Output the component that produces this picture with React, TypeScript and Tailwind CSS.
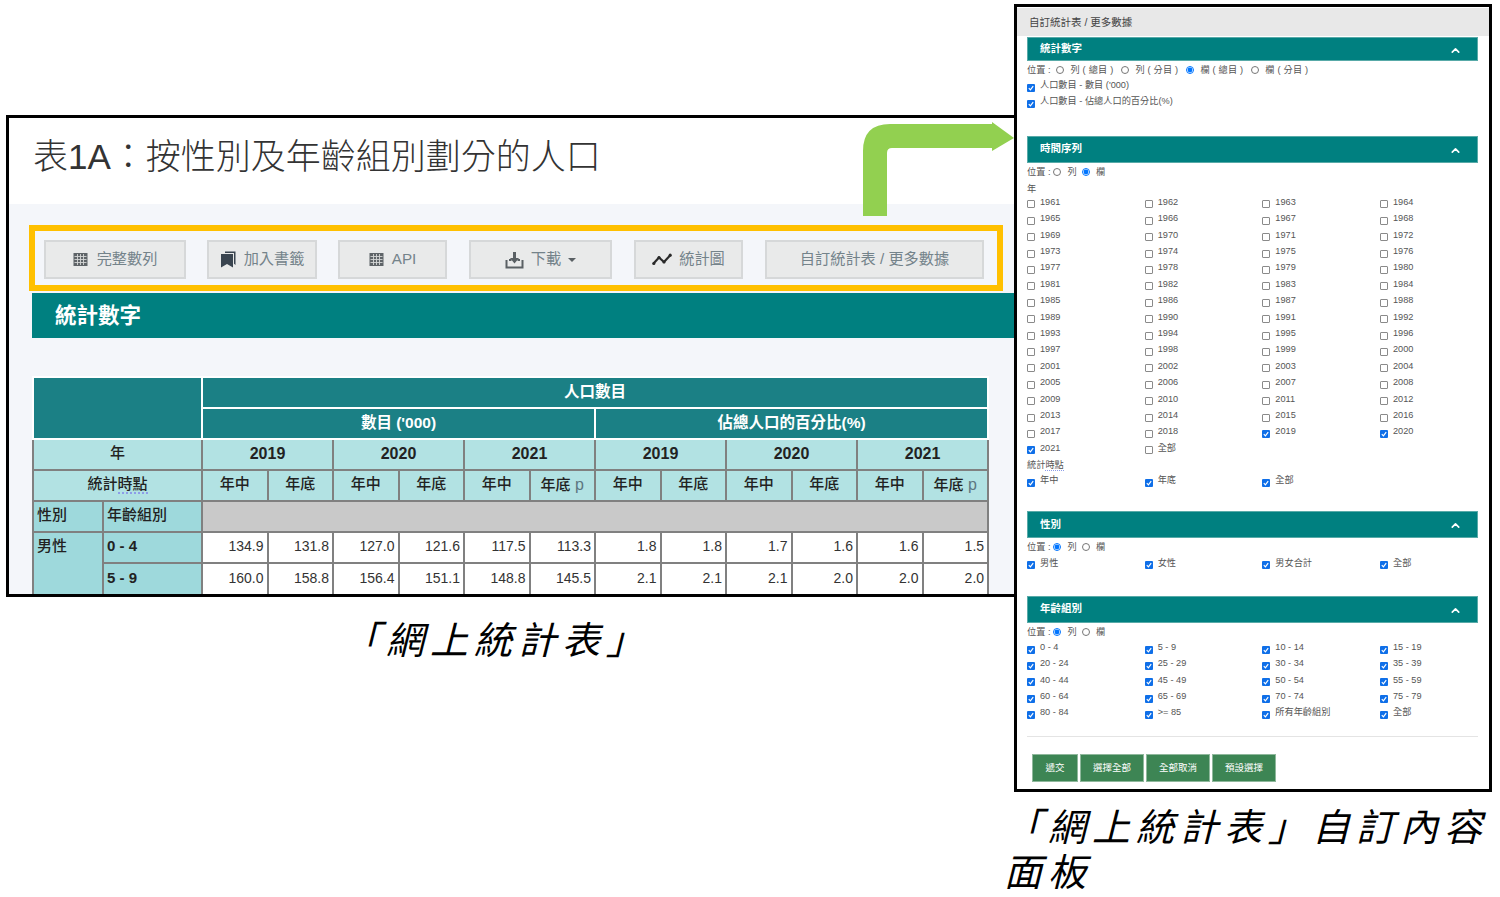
import { ChevronUp } from 'lucide-react'
import type { ReactNode } from 'react'

const YEARS = [
  1961, 1962, 1963, 1964, 1965, 1966, 1967, 1968, 1969, 1970, 1971, 1972, 1973, 1974, 1975, 1976,
  1977, 1978, 1979, 1980, 1981, 1982, 1983, 1984, 1985, 1986, 1987, 1988, 1989, 1990, 1991, 1992,
  1993, 1994, 1995, 1996, 1997, 1998, 1999, 2000, 2001, 2002, 2003, 2004, 2005, 2006, 2007, 2008,
  2009, 2010, 2011, 2012, 2013, 2014, 2015, 2016, 2017, 2018, 2019, 2020, 2021,
]
const CHECKED_YEARS = [2019, 2020, 2021]

const AGES = [
  '0 - 4', '5 - 9', '10 - 14', '15 - 19', '20 - 24', '25 - 29', '30 - 34', '35 - 39', '40 - 44', '45 - 49',
  '50 - 54', '55 - 59', '60 - 64', '65 - 69', '70 - 74', '75 - 79', '80 - 84', '>= 85', '所有年齡組別', '全部',
]

const ROW_A = ['134.9', '131.8', '127.0', '121.6', '117.5', '113.3', '1.8', '1.8', '1.7', '1.6', '1.6', '1.5']
const ROW_B = ['160.0', '158.8', '156.4', '151.1', '148.8', '145.5', '2.1', '2.1', '2.1', '2.0', '2.0', '2.0']

function GridIcon() {
  return (
    <svg width="15" height="15" viewBox="0 0 15 15" className="shrink-0">
      <rect x="0.5" y="1" width="14" height="13" fill="#5f6468" />
      <path d="M1.5 4.5H13.5M1.5 7.5H13.5M1.5 10.5H13.5M4.5 2V13M7.5 2V13M10.5 2V13" stroke="#d4d6d6" strokeWidth="0.9" />
    </svg>
  )
}

function BookmarkIcon() {
  return (
    <svg width="16" height="17" viewBox="0 0 16 17" className="shrink-0">
      <path d="M5 0.5H15.5V14L14 12.8V2H5Z" fill="#3a4550" />
      <path d="M1 3H13V16.5L7 13L1 16.5Z" fill="#3a4550" />
    </svg>
  )
}

function SaveIcon() {
  return (
    <svg width="19" height="18" viewBox="0 0 19 18" className="shrink-0">
      <path d="M1.5 9V16.5H17.5V9" fill="none" stroke="#5a6064" strokeWidth="2" />
      <path d="M4 9H6.5M12.5 9H15" stroke="#5a6064" strokeWidth="2" />
      <path d="M8 1H11V7H14L9.5 12.5L5 7H8Z" fill="#5a6064" />
    </svg>
  )
}

function LineIcon() {
  return (
    <svg width="20" height="13" viewBox="0 0 20 13" className="shrink-0">
      <path d="M1.5 10.5L7 4.5L12 9L18.5 2" fill="none" stroke="#2a2a2a" strokeWidth="2.2" />
      <circle cx="1.8" cy="10.5" r="1.6" fill="#2a2a2a" />
      <circle cx="7" cy="4.5" r="1.6" fill="#2a2a2a" />
      <circle cx="12" cy="9" r="1.6" fill="#2a2a2a" />
      <circle cx="18.2" cy="2.2" r="1.6" fill="#2a2a2a" />
    </svg>
  )
}

function ToolButton({ w, ml, gap = 'gap-[8px]', children }: { w: string; ml: string; gap?: string; children: ReactNode }) {
  return (
    <div className={`${w} ${ml} ${gap} h-[39px] flex items-center justify-center bg-[#e9eaea] border-2 border-[#d6d8d9] text-[15.2px] text-[#74838a]`}>
      {children}
    </div>
  )
}

function Check({ label, checked = true }: { label: string; checked?: boolean }) {
  return (
    <div className="flex items-center h-[16.4px] text-[9.2px] leading-none text-[#555]">
      <span className={`w-2 h-2 mt-[3px] shrink-0 rounded-[1px] flex items-center justify-center ${checked ? 'bg-[#0f6fe8]' : 'bg-white border border-[#8a8a8a]'}`}>
        {checked && (
          <svg width="6" height="6" viewBox="0 0 6 6">
            <path d="M0.8 3.2L2.4 4.8L5.2 1.2" fill="none" stroke="#fff" strokeWidth="1.2" />
          </svg>
        )}
      </span>
      <span className="ml-[5px] -mt-px">{label}</span>
    </div>
  )
}

function Radio({ label, checked = false }: { label: string; checked?: boolean }) {
  return (
    <span className="flex items-center">
      <input type="radio" defaultChecked={checked} className="w-2 h-2 m-0" />
      <span className="ml-[6px] mt-px tracking-[0.2px]">{label}</span>
    </span>
  )
}

function PositionRow({ children, gap }: { children: ReactNode; gap: string }) {
  return (
    <div className={`flex items-center h-4 mt-px ${gap} text-[9.2px] leading-none text-[#555] whitespace-pre`}>
      <span className="-mr-[2px] mt-px">位置 :</span>
      {children}
    </div>
  )
}

function SectionBar({ title, h }: { title: string; h: string }) {
  return (
    <div className={`${h} flex items-center justify-between pl-[12px] pr-[15px] bg-[#008080] border border-[#58aaa8] text-[10.5px] font-bold text-white`}>
      <span>{title}</span>
      <ChevronUp size={13} strokeWidth={3} className="mt-[2px]" />
    </div>
  )
}

const Grid = ({ children }: { children: ReactNode }) => (
  <div className="grid grid-cols-[117.67px_117.67px_117.67px_1fr]">{children}</div>
)

const thDark = 'border-2 border-white bg-[#1b8085] text-white font-bold text-[15.5px] pb-[2px]'
const thLight = 'border-2 border-[#808080] bg-[#b2e2e3] text-[#222] text-[15px] font-medium pb-[2px]'
const stub = 'border-2 border-[#808080] bg-[#9ed9dc] text-[#222] text-[15px] text-left pl-[3px] pb-[2px]'
const td = 'border-2 border-[#808080] bg-white text-right pr-[3px] pb-[2px] text-[14px] text-[#333]'

export default function App() {
  return (
    <div className="relative w-[1500px] h-[897px] overflow-hidden bg-white font-['Liberation_Sans','Noto_Sans_CJK_TC',sans-serif]">
      {/* main table window */}
      <div className="absolute left-[6px] top-[115px] w-[1012px] h-[482px] border-[3px] border-black bg-[#f4f6fa] overflow-hidden">
        <div className="h-[86px] bg-white pl-[24px] pt-[17px] text-[35px] font-light leading-[44px] text-[#333] whitespace-nowrap">
          表1A：按性別及年齡組別劃分的人口
        </div>

        <div className="ml-[20px] mt-[21px] w-[974px] h-[66px] border-[6px] border-[#ffc000] flex pl-[9px] pt-[9px]">
          <ToolButton w="w-[142px]" ml="ml-0" gap="gap-[9px]"><GridIcon />完整數列</ToolButton>
          <ToolButton w="w-[110px]" ml="ml-[21px]"><BookmarkIcon />加入書籤</ToolButton>
          <ToolButton w="w-[109px]" ml="ml-[21px]"><GridIcon />API</ToolButton>
          <ToolButton w="w-[143px]" ml="ml-[22px]" gap="gap-[7px]">
            <SaveIcon />下載
            <span className="w-0 h-0 border-x-[4px] border-x-transparent border-t-[4px] border-t-[#5a6064]" />
          </ToolButton>
          <ToolButton w="w-[109px]" ml="ml-[22px]" gap="gap-[7px]"><LineIcon />統計圖</ToolButton>
          <ToolButton w="w-[219px]" ml="ml-[22px]">自訂統計表 / 更多數據</ToolButton>
        </div>

        <div className="ml-[23px] mt-[2px] h-[45px] flex items-center pl-[23px] pt-[2px] bg-[#008080] text-[21.5px] font-bold text-white">
          統計數字
        </div>

        <table className="ml-[23px] mt-[38px] w-[955px] table-fixed border-collapse text-center">
          <colgroup>
            <col className="w-[70px]" />
            <col className="w-[99px]" />
            {ROW_A.map((_, i) => <col key={i} className="w-[65.5px]" />)}
          </colgroup>
          <tbody>
            <tr className="h-[31px]">
              <th colSpan={2} rowSpan={2} className={thDark} />
              <th colSpan={12} className={thDark}>人口數目</th>
            </tr>
            <tr className="h-[31px]">
              <th colSpan={6} className={thDark}>數目 ('000)</th>
              <th colSpan={6} className={thDark}>佔總人口的百分比(%)</th>
            </tr>
            <tr className="h-[31px]">
              <th colSpan={2} className={thLight}>年</th>
              {[2019, 2020, 2021, 2019, 2020, 2021].map((y, i) => (
                <th key={i} colSpan={2} className={`${thLight} !font-bold !text-[16px]`}>{y}</th>
              ))}
            </tr>
            <tr className="h-[31px]">
              <th colSpan={2} className={thLight}>
                統計<span className="border-b-2 border-dotted border-[#8d9de8]">時點</span>
              </th>
              {[0, 1, 2, 3, 4, 5].flatMap((n) => [
                <th key={`m${n}`} className={thLight}>年中</th>,
                <th key={`e${n}`} className={thLight}>
                  年底{n % 3 === 2 ? <span className="text-[#5d7680] text-[16px]"> p</span> : null}
                </th>,
              ])}
            </tr>
            <tr className="h-[31px]">
              <th className={`${stub} font-medium`}>性別</th>
              <th className={`${stub} font-medium`}>年齡組別</th>
              <td colSpan={12} className="border-2 border-[#808080] bg-[#c9c9c9]" />
            </tr>
            <tr className="h-[31px]">
              <th rowSpan={2} className={`${stub} align-top pt-[2px] font-medium`}>男性</th>
              <th className={`${stub} font-bold`}>0 - 4</th>
              {ROW_A.map((v, i) => <td key={i} className={td}>{v}</td>)}
            </tr>
            <tr className="h-[32px]">
              <th className={`${stub} font-bold`}>5 - 9</th>
              {ROW_B.map((v, i) => <td key={i} className={td}>{v}</td>)}
            </tr>
          </tbody>
        </table>
      </div>

      {/* green arrow */}
      <svg width="152" height="96" viewBox="0 0 152 96" className="absolute left-[863px] top-[121px]">
        <path d="M0 95V30Q0 3 27 3H129V1L151 17L129 30V27H29Q24 27 24 32V95Z" fill="#92d050" />
      </svg>

      {/* custom content panel */}
      <div className="absolute left-[1014px] top-[4px] w-[478px] h-[788px] border-[3px] border-black bg-white overflow-hidden">
        <div className="mt-px h-[28px] flex items-center pl-[12px] pt-[2px] bg-[#e8e8e8] text-[10.5px] text-[#444]">
          自訂統計表 / 更多數據
        </div>
        <div className="ml-[10px] w-[451px]">
          <div className="mt-px">
            <SectionBar title="統計數字" h="h-[24px]" />
            <PositionRow gap="gap-[8px]">
              <Radio label="列 ( 總目 )" />
              <Radio label="列 ( 分目 )" />
              <Radio label="欄 ( 總目 )" checked />
              <Radio label="欄 ( 分目 )" />
            </PositionRow>
            <Check label="人口數目 - 數目 ('000)" />
            <Check label="人口數目 - 佔總人口的百分比(%)" />
          </div>

          <div className="mt-[25px]">
            <SectionBar title="時間序列" h="h-[27px]" />
            <PositionRow gap="gap-[5px]">
              <Radio label="列" />
              <Radio label="欄" checked />
            </PositionRow>
            <div className="mt-[5px] h-[10px] text-[9.2px] leading-none text-[#555]">年</div>
            <Grid>
              {YEARS.map((y) => <Check key={y} label={String(y)} checked={CHECKED_YEARS.includes(y)} />)}
              <Check label="全部" checked={false} />
            </Grid>
            <div className="mt-[4px] h-[12px] text-[9.2px] leading-none text-[#555]">
              統計<span className="border-b border-dotted border-[#8d9de8]">時點</span>
            </div>
            <Grid>
              <Check label="年中" />
              <Check label="年底" />
              <Check label="全部" />
            </Grid>
          </div>

          <div className="mt-[22px]">
            <SectionBar title="性別" h="h-[27px]" />
            <PositionRow gap="gap-[5px]">
              <Radio label="列" checked />
              <Radio label="欄" />
            </PositionRow>
            <Grid>
              <Check label="男性" />
              <Check label="女性" />
              <Check label="男女合計" />
              <Check label="全部" />
            </Grid>
          </div>

          <div className="mt-[24px]">
            <SectionBar title="年齡組別" h="h-[27px]" />
            <PositionRow gap="gap-[5px]">
              <Radio label="列" checked />
              <Radio label="欄" />
            </PositionRow>
            <Grid>
              {AGES.map((a) => <Check key={a} label={a} />)}
            </Grid>
          </div>

          <div className="mt-[14px] h-px bg-[#e4e4e4]" />

          <div className="mt-[17px] ml-[5px] flex gap-[2px]">
            {['遞交', '選擇全部', '全部取消', '預設選擇'].map((b, i) => (
              <div key={b} className={`${i === 0 ? 'w-[46px]' : 'w-[64px]'} h-[28px] flex items-center justify-center bg-[#3d8554] border border-[#8fb89c] text-[9.5px] text-white`}>
                {b}
              </div>
            ))}
          </div>
        </div>
      </div>

      {/* captions */}
      <div className="absolute left-[342px] top-[616px] text-[38px] leading-[50px] tracking-[6px] italic text-black whitespace-nowrap">
        「網上統計表」
      </div>
      <div className="absolute left-[1004px] top-[806px] w-[490px] text-[38px] leading-[45px] tracking-[6px] italic text-black">
        「網上統計表」自訂內容面板
      </div>
    </div>
  )
}
